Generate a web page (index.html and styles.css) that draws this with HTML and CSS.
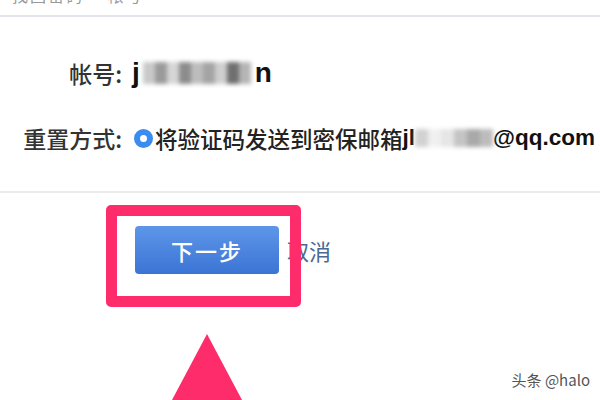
FILE: index.html
```html
<!DOCTYPE html>
<html lang="zh-CN">
<head>
    <meta charset="UTF-8">
    <meta name="viewport" content="width=device-width, initial-scale=1.0">
    <title>找回密码</title>
    <link rel="stylesheet" href="styles.css">
</head>
<body>
    <div id="page">
        <div class="top-bar">
            <p class="top-title">找回密码 <span>帐号</span></p>
        </div>
        <div class="form">
            <div class="label">帐号:</div>
            <div class="value account">j<span class="mosaic">
                <i style="background:#c9c9c9"></i><i style="background:#9a9a9a"></i><i style="background:#d6d6d6"></i><i style="background:#8c8c8c"></i><i style="background:#bdbdbd"></i><i style="background:#a4a4a4"></i><i style="background:#cfcfcf"></i><i style="background:#6f6f6f"></i><i style="background:#b5b5b5"></i>
            </span>n</div>
            <div class="label">重置方式:</div>
            <div class="value method">
                <span class="radio"></span>将验证码发送到密保邮箱<b>jl</b><span class="mosaic small">
                    <i style="background:#d2d2d2"></i><i style="background:#f0f0f0"></i><i style="background:#e6e6e6"></i><i style="background:#c4c4c4"></i><i style="background:#a9a9a9"></i><i style="background:#bcbcbc"></i>
                </span><b>@qq.com</b>
            </div>
        </div>
        <div class="actions">
            <button class="btn-next">下一步</button>
            <a class="cancel" href="#">取消</a>
        </div>

        <!-- annotation overlay -->
        <div class="highlight"></div>
        <svg class="arrow" width="80" height="70" viewBox="0 0 80 70">
            <polygon points="40,0 5,66 15,66 15,70 65,70 65,66 75,66" fill="#fe2c6a"/>
        </svg>
        <div class="watermark">头条 @halo</div>
    </div>
</body>
</html>
```

FILE: styles.css
```css
* {
    margin: 0;
    padding: 0;
    box-sizing: border-box;
}
body {
    font-family: "Noto Sans CJK SC", "Liberation Sans", sans-serif;
    background-color: #fff;
    color: #333;
}
#page {
    width: 600px;
    height: 400px;
    overflow: hidden;
    position: relative;
}
.top-bar {
    height: 17px;
    border-bottom: 2px solid #e3e3ea;
    overflow: hidden;
}
.top-title {
    margin-top: -17px;
    padding-left: 12px;
    font-size: 16px;
    color: #999;
    letter-spacing: 2px;
}
.top-title span {
    margin-left: 18px;
}
.form {
    display: grid;
    grid-template-columns: 122px 1fr;
    column-gap: 10px;
    row-gap: 25px;
    align-items: center;
    padding: 36px 0 33px;
    border-bottom: 2px solid #ebebeb;
}
.label {
    text-align: right;
    font-size: 23px;
    font-weight: 500;
    height: 40px;
    line-height: 40px;
    color: #333;
}
.value {
    display: flex;
    align-items: center;
    height: 40px;
}
.account {
    font-family: "Liberation Sans", sans-serif;
    font-weight: bold;
    font-size: 28px;
    color: #111;
}
.mosaic {
    display: inline-flex;
    margin: 0 4px 0 3px;
    filter: blur(2px);
}
.mosaic i {
    display: block;
    width: 12px;
    height: 22px;
}
.mosaic.small {
    margin: 0;
}
.mosaic.small i {
    width: 13px;
    height: 18px;
}
.method {
    font-size: 22.5px;
    font-weight: 500;
    color: #222;
    margin-left: 2px;
}
.method b {
    font-family: "Liberation Sans", sans-serif;
    font-weight: bold;
    color: #111;
}
.radio {
    width: 19px;
    height: 19px;
    border-radius: 50%;
    border: 6px solid #3a8cf0;
    background-color: #fff;
    margin-right: 2px;
}
.actions {
    display: flex;
    align-items: center;
    padding: 33px 0 0 135px;
}
.btn-next {
    width: 144px;
    height: 48px;
    border: none;
    border-radius: 4px;
    background: linear-gradient(#5d96e8, #3c74d5);
    color: #fff;
    font-family: "Noto Sans CJK SC", sans-serif;
    font-size: 22px;
    font-weight: 500;
    letter-spacing: 2px;
}
.cancel {
    margin-left: 8px;
    font-size: 22px;
    color: #4a6892;
    text-decoration: none;
}
.highlight {
    position: absolute;
    left: 106px;
    top: 205px;
    width: 195px;
    height: 102px;
    border: 11px solid #fe2c6a;
    border-radius: 5px;
}
.arrow {
    position: absolute;
    left: 167px;
    top: 334px;
}
.watermark {
    position: absolute;
    right: 10px;
    bottom: 10px;
    font-size: 15px;
    color: #555;
    text-shadow: 0 0 2px #fff;
}
```
